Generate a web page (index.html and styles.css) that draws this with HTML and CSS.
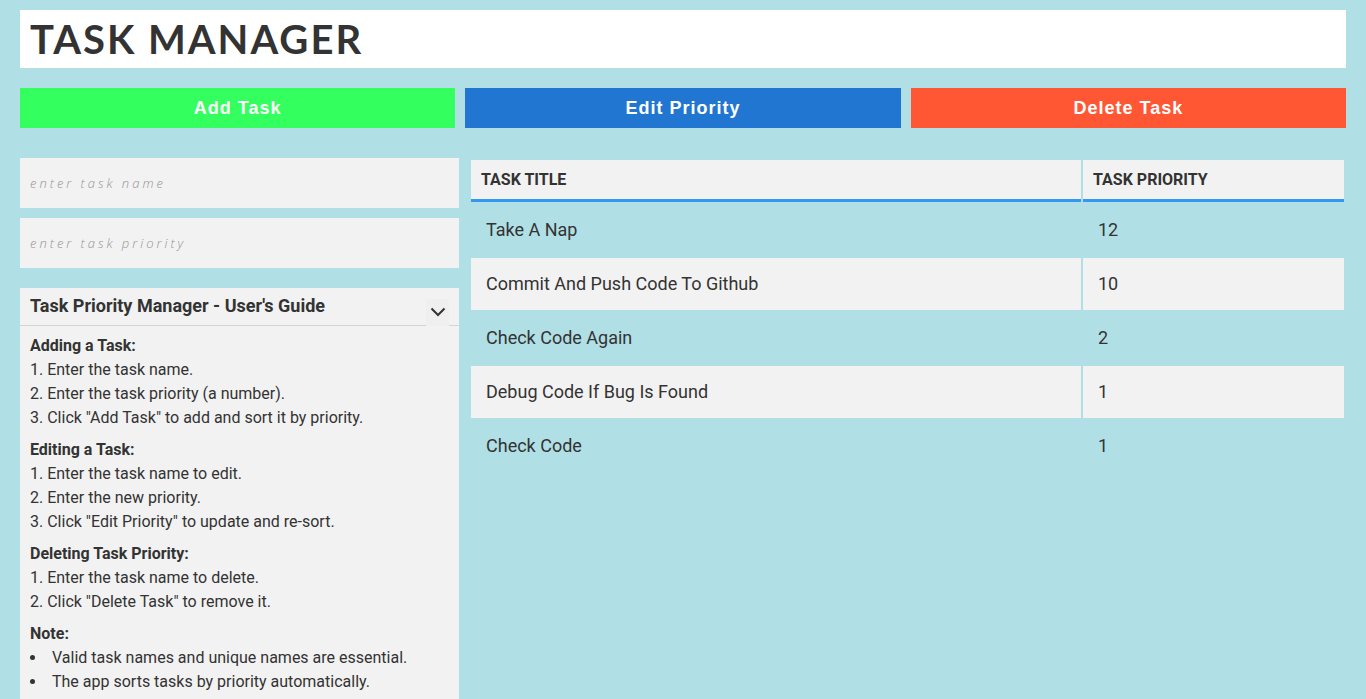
FILE: index.html
```html
<!DOCTYPE html>
<html>
<head>
<meta charset="utf-8">
<title>Task Manager</title>
<link rel="stylesheet" href="styles.css">
</head>
<body>
<header class="title-bar"><h1>TASK MANAGER</h1></header>
<div class="actions">
  <button class="btn btn-add">Add Task</button>
  <button class="btn btn-edit">Edit Priority</button>
  <button class="btn btn-delete">Delete Task</button>
</div>
<main class="content">
  <aside class="side">
    <input class="field" type="text" placeholder="enter task name">
    <input class="field" type="text" placeholder="enter task priority">
    <section class="guide">
      <div class="guide-head">
        <span class="guide-title">Task Priority Manager - User's Guide</span>
        <span class="chev"><svg width="16" height="10" viewBox="0 0 16 10"><path d="M1.5 1.5 L8 8 L14.5 1.5" fill="none" stroke="#333" stroke-width="2"/></svg></span>
      </div>
      <div class="guide-body">
        <div class="sect">
          <div class="sect-title">Adding a Task:</div>
          <div>1. Enter the task name.</div>
          <div>2. Enter the task priority (a number).</div>
          <div>3. Click "Add Task" to add and sort it by priority.</div>
        </div>
        <div class="sect">
          <div class="sect-title">Editing a Task:</div>
          <div>1. Enter the task name to edit.</div>
          <div>2. Enter the new priority.</div>
          <div>3. Click "Edit Priority" to update and re-sort.</div>
        </div>
        <div class="sect">
          <div class="sect-title">Deleting Task Priority:</div>
          <div>1. Enter the task name to delete.</div>
          <div>2. Click "Delete Task" to remove it.</div>
        </div>
        <div class="sect">
          <div class="sect-title">Note:</div>
          <ul class="notes">
            <li>Valid task names and unique names are essential.</li>
            <li>The app sorts tasks by priority automatically.</li>
          </ul>
        </div>
      </div>
    </section>
  </aside>
  <table class="tasks">
    <thead>
      <tr><th class="c-title">TASK TITLE</th><th class="c-prio">TASK PRIORITY</th></tr>
    </thead>
    <tbody>
      <tr><td>Take A Nap</td><td>12</td></tr>
      <tr class="alt"><td>Commit And Push Code To Github</td><td>10</td></tr>
      <tr><td>Check Code Again</td><td>2</td></tr>
      <tr class="alt"><td>Debug Code If Bug Is Found</td><td>1</td></tr>
      <tr><td>Check Code</td><td>1</td></tr>
    </tbody>
  </table>
</main>
</body>
</html>
```
FILE: styles.css
```css
* { box-sizing: border-box; }
html, body { margin: 0; padding: 0; }
body {
  background: #b0e0e6;
  padding: 10px 20px 0 20px;
  font-family: Roboto, "Liberation Sans", sans-serif;
  color: #333;
  overflow: hidden;
  height: 699px;
}
.title-bar {
  background: #fff;
  height: 58px;
  display: flex;
  align-items: center;
  padding: 0 10px;
}
.title-bar h1 {
  margin: 0;
  font-family: Lato, sans-serif;
  font-weight: 700;
  font-size: 40px;
  letter-spacing: 2px;
  color: #333;
}
.actions {
  display: flex;
  gap: 10px;
  margin-top: 20px;
}
.btn {
  flex: 1;
  height: 40px;
  border: none;
  color: #fff;
  font-family: "Liberation Sans", Arial, sans-serif;
  font-weight: 700;
  font-size: 18px;
  letter-spacing: 1px;
  padding: 0;
}
.btn-add { background: #33ff5e; }
.btn-edit { background: #2176d2; }
.btn-delete { background: #ff5733; }
.content {
  display: flex;
  gap: 10px;
  margin-top: 30px;
  align-items: flex-start;
}
.side {
  width: 439px;
  flex: none;
  display: flex;
  flex-direction: column;
}
.field {
  height: 50px;
  border: none;
  background: #f2f2f2;
  margin: 0 0 10px 0;
  padding: 0 10px;
  font-family: "Open Sans", sans-serif;
  font-style: italic;
  font-size: 13px;
  letter-spacing: 3px;
  color: #333;
}
.field::placeholder { color: #949494; font-weight: 300; }
.guide {
  margin-top: 10px;
  background: #f2f2f2;
}
.guide-head {
  display: flex;
  align-items: center;
  justify-content: space-between;
  height: 38px;
  padding: 0 10px;
  border-bottom: 1px solid #d4d4d4;
}
.guide-title {
  font-weight: 700;
  font-size: 18px;
  color: #333;
  margin-top: -2px;
}
.chev {
  width: 23px;
  height: 27px;
  margin-top: 11px;
  display: flex;
  align-items: center;
  justify-content: center;
  background: #efefef;
}
.guide-body {
  padding: 8px 10px 10px 10px;
  font-size: 16px;
  line-height: 24px;
}
.sect { margin-bottom: 8px; }
.sect-title { font-weight: 700; }
.notes {
  margin: 0;
  padding: 0;
  list-style: none;
}
.notes li::before {
  content: "";
  display: inline-block;
  width: 5px;
  height: 5px;
  border-radius: 50%;
  background: #333;
  margin: 0 17px 2px 0;
  vertical-align: middle;
}
.tasks {
  flex: 1;
  border-collapse: separate;
  border-spacing: 2px;
  margin-top: 0;
}
.tasks th {
  background: #f2f2f2;
  text-align: left;
  font-size: 16px;
  font-weight: 700;
  padding: 0 10px;
  height: 42px;
  border-bottom: 3px solid #3498f0;
  color: #333;
}
.tasks .c-prio { width: 261px; }
.tasks td {
  height: 52px;
  padding: 0 15px 1px 15px;
  font-size: 18px;
  color: #333;
}
.tasks tr.alt td { background: #f2f2f2; }
```
